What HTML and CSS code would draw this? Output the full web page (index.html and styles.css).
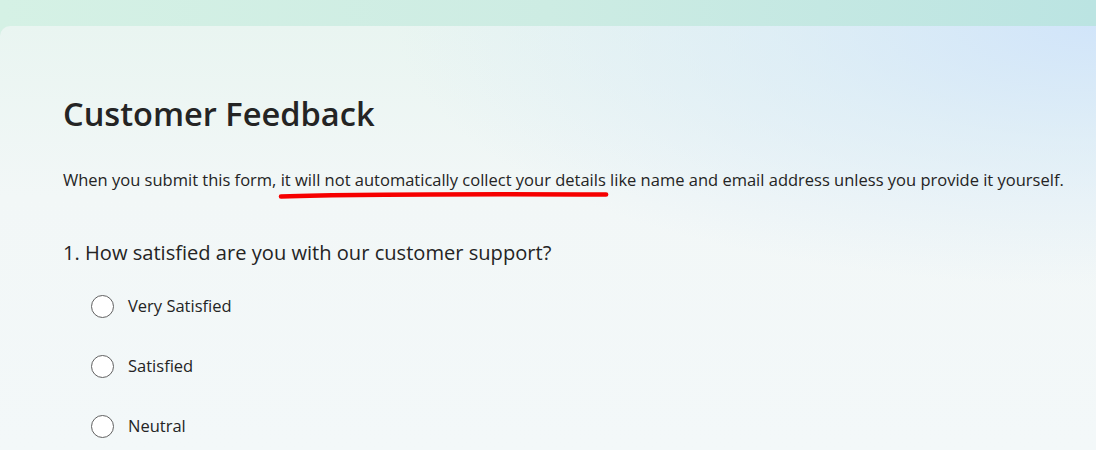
FILE: index.html
```html
<!DOCTYPE html>
<html lang="en">
<head>
<meta charset="utf-8">
<title>Customer Feedback</title>
<link rel="stylesheet" href="styles.css">
</head>
<body>
<div class="band"></div>
<main class="card">
  <h1 class="title">Customer Feedback</h1>
  <p class="intro">When you submit this form, <span class="mark">it will not automatically collect your details<svg class="scribble" viewBox="0 0 330 10" preserveAspectRatio="none" aria-hidden="true"><path d="M3 6.5 C 80 4, 200 4, 327 4.5" fill="none" stroke="#f60000" stroke-width="4.6" stroke-linecap="round"/></svg></span> like name and email address unless you provide it yourself.</p>
  <section class="question">
    <h2 class="q-title">1. How satisfied are you with our customer support?</h2>
    <div class="options">
      <label class="option"><span class="radio"></span><span class="opt-label">Very Satisfied</span></label>
      <label class="option"><span class="radio"></span><span class="opt-label">Satisfied</span></label>
      <label class="option"><span class="radio"></span><span class="opt-label">Neutral</span></label>
    </div>
  </section>
</main>
</body>
</html>
```
FILE: styles.css
```css
html, body {
  margin: 0;
  padding: 0;
}
body {
  width: 1096px;
  height: 450px;
  overflow: hidden;
  font-family: "Open Sans", "Noto Sans", sans-serif;
  color: #242424;
  background: linear-gradient(90deg, #d5f1e5 0%, #cdece3 50%, #bbe4e2 100%);
}
.band {
  height: 26px;
}
.card {
  height: 424px;
  box-sizing: border-box;
  border-radius: 10px 0 0 0;
  padding: 0 16px 0 63px;
  background:
    radial-gradient(ellipse 700px 260px at 100% 0%, rgba(208,228,250,0.95) 0%, rgba(214,233,248,0.6) 45%, rgba(240,246,248,0) 100%),
    linear-gradient(180deg, #e9f5f1 0%, #f2f7f7 40%, #f3f8f9 100%);
}
.title {
  margin: 0;
  padding-top: 66px;
  font-size: 32.6px;
  font-weight: 600;
  line-height: 44px;
}
.intro {
  margin: 32px 0 0;
  font-size: 16.5px;
  line-height: 24px;
  white-space: nowrap;
}
.mark {
  position: relative;
}
.scribble {
  position: absolute;
  left: -3px;
  bottom: -9px;
  width: calc(100% + 6px);
  height: 10px;
}
.question {
  margin-top: 47px;
}
.q-title {
  margin: 0;
  font-size: 20.1px;
  font-weight: 400;
  line-height: 28px;
}
.options {
  display: flex;
  flex-direction: column;
  gap: 36px;
  margin-top: 27px;
  padding-left: 28px;
}
.option {
  display: flex;
  align-items: center;
  gap: 14px;
  height: 24px;
}
.radio {
  width: 21px;
  height: 21px;
  border: 1.5px solid #616161;
  border-radius: 50%;
  background: #ffffff;
  flex: none;
}
.opt-label {
  font-size: 16.5px;
  line-height: 24px;
}
```
